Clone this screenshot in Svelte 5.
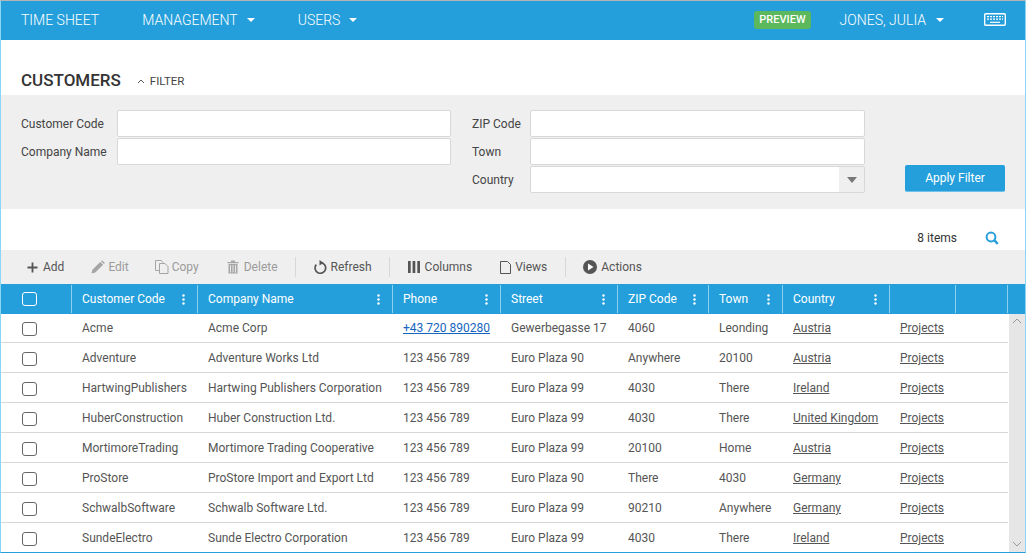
<script>
  const columns = ['Customer Code', 'Company Name', 'Phone', 'Street', 'ZIP Code', 'Town', 'Country']

  const customers = [
    ['Acme', 'Acme Corp', '+43 720 890280', 'Gewerbegasse 17', '4060', 'Leonding', 'Austria'],
    ['Adventure', 'Adventure Works Ltd', '123 456 789', 'Euro Plaza 90', 'Anywhere', '20100', 'Austria'],
    ['HartwingPublishers', 'Hartwing Publishers Corporation', '123 456 789', 'Euro Plaza 99', '4030', 'There', 'Ireland'],
    ['HuberConstruction', 'Huber Construction Ltd.', '123 456 789', 'Euro Plaza 99', '4030', 'There', 'United Kingdom'],
    ['MortimoreTrading', 'Mortimore Trading Cooperative', '123 456 789', 'Euro Plaza 99', '20100', 'Home', 'Austria'],
    ['ProStore', 'ProStore Import and Export Ltd', '123 456 789', 'Euro Plaza 90', 'There', '4030', 'Germany'],
    ['SchwalbSoftware', 'Schwalb Software Ltd.', '123 456 789', 'Euro Plaza 99', '90210', 'Anywhere', 'Germany'],
    ['SundeElectro', 'Sunde Electro Corporation', '123 456 789', 'Euro Plaza 99', '4030', 'There', 'Ireland']
  ]
</script>

<div class="page">
  <nav class="navbar">
    <a class="nav-item first" href="/">TIME SHEET</a>
    <a class="nav-item management" href="/">MANAGEMENT <span class="caret"></span></a>
    <a class="nav-item" href="/">USERS <span class="caret"></span></a>
    <span class="preview">PREVIEW</span>
    <a class="nav-item user" href="/">JONES, JULIA <span class="caret"></span></a>
    <svg class="keyboard" width="22" height="13" viewBox="0 0 22 13" fill="none">
      <rect x=".7" y=".7" width="20.600" height="11.600" rx="1" stroke="#fff" stroke-width="1.400" />
      <path d="M3 3.700h16M3 6.200h16" stroke="#fff" stroke-width="1.300" stroke-dasharray="2 1" />
      <path d="M6 9.300h10" stroke="#fff" stroke-width="1.200" />
    </svg>
  </nav>

  <div class="title-row">
    <h1>CUSTOMERS</h1>
    <span class="filter-toggle">
      <svg width="8" height="5" viewBox="0 0 8 5" fill="none"><path d="M1 4l3-3 3 3" stroke="#555" stroke-width="1" /></svg>
      FILTER
    </span>
  </div>

  <section class="filter">
    <div class="filter-col first-col">
      <label><span>Customer Code</span><input type="text" /></label>
      <label><span>Company Name</span><input type="text" /></label>
    </div>
    <div class="filter-col second-col">
      <label><span>ZIP Code</span><input type="text" /></label>
      <label><span>Town</span><input type="text" /></label>
      <label>
        <span>Country</span>
        <div class="select"><i></i></div>
      </label>
    </div>
    <button class="apply">Apply Filter</button>
  </section>

  <div class="items-row">
    <span>8 items</span>
    <svg width="14" height="14" viewBox="0 0 14 14" fill="none">
      <circle cx="6" cy="6" r="4.400" stroke="#259fdb" stroke-width="2" />
      <path d="M9.200 9.200l3.600 3.600" stroke="#259fdb" stroke-width="2.400" />
    </svg>
  </div>

  <div class="toolbar">
    <span class="tool add">
      <svg width="11" height="11" viewBox="0 0 11 11"><path d="M5.500 .5v10M.5 5.500h10" stroke="#555" stroke-width="1.800" /></svg>
      Add
    </span>
    <span class="tool disabled edit">
      <svg width="14" height="14" viewBox="0 0 14 14"><path d="M.5 13.500l.9-3.800 7.800-7.800 2.900 2.900-7.800 7.800zM10 1.200l1-1 2.900 2.900-1 1z" fill="#a5a5a5" /></svg>
      Edit
    </span>
    <span class="tool disabled copy">
      <svg width="14" height="14" viewBox="0 0 14 14" fill="none" stroke="#a5a5a5"><path d="M4 10.500H.5V.5h6l1.500 2" /><path d="M4.500 3.500h5.500l3 3v7H4.500z" fill="#efefef" /></svg>
      Copy
    </span>
    <span class="tool disabled delete">
      <svg width="12" height="14" viewBox="0 0 12 14"><path d="M.5 2h11v1.200H.5zM4 .5h4v1.500H4zM1.500 4h9v9.500h-9z" fill="#a5a5a5" /><path d="M3.500 5v7.500M6 5v7.500M8.500 5v7.500" stroke="#efefef" stroke-width=".9" /></svg>
      Delete
    </span>
    <span class="sep"></span>
    <span class="tool refresh">
      <svg width="14" height="14" viewBox="0 0 14 14" fill="none"><path d="M3.300 4.600a5.300 5.300 0 1 0 4.200-1.900" stroke="#555" stroke-width="1.700" /><path d="M6.500 0l4 2.800-4 2.800z" fill="#555" /></svg>
      Refresh
    </span>
    <span class="sep"></span>
    <span class="tool columns">
      <svg width="12" height="12" viewBox="0 0 12 12"><path d="M0 0h2.700v12H0zM4.600 0h2.700v12H4.600zM9.300 0H12v12H9.300z" fill="#555" /></svg>
      Columns
    </span>
    <span class="tool views">
      <svg width="11" height="13" viewBox="0 0 11 13" fill="none"><path d="M.5 .5h7l3 3v9H.5z" stroke="#555" /></svg>
      Views
    </span>
    <span class="sep"></span>
    <span class="tool actions">
      <svg width="14" height="14" viewBox="0 0 14 14"><circle cx="7" cy="7" r="7" fill="#555" /><path d="M5 3.500l5.500 3.500L5 10.500z" fill="#fff" /></svg>
      Actions
    </span>
  </div>

  <div class="grid-head">
    <div class="head-cell check"><span class="box light"></span></div>
    {#each columns as col}
      <div class="head-cell">
        <span>{col}</span>
        <svg width="3" height="11" viewBox="0 0 3 11"><circle cx="1.500" cy="1.500" r="1.200" fill="#fff" /><circle cx="1.500" cy="5.500" r="1.200" fill="#fff" /><circle cx="1.500" cy="9.500" r="1.200" fill="#fff" /></svg>
      </div>
    {/each}
    <div class="head-cell"></div>
    <div class="head-cell"></div>
    <div class="head-cell last"></div>
  </div>

  <div class="grid-wrap">
    <div class="grid-body">
      {#each customers as row}
        <div class="grid-row">
          <div class="cell check"><span class="box"></span></div>
          {#each row as value, i}
            <div class="cell">
              {#if i === 2 && value.startsWith('+')}
                <a class="phone" href="/">{value}</a>
              {:else if i === 6}
                <a href="/">{value}</a>
              {:else}
                {value}
              {/if}
            </div>
          {/each}
          <div class="cell"><a href="/">Projects</a></div>
          <div class="cell"></div>
        </div>
      {/each}
    </div>
    <div class="scrollbar">
      <svg width="10" height="6" viewBox="0 0 10 6" fill="none"><path d="M1 5l4-4 4 4" stroke="#999" /></svg>
      <svg width="10" height="6" viewBox="0 0 10 6" fill="none"><path d="M1 1l4 4 4-4" stroke="#999" /></svg>
    </div>
  </div>
</div>

<style>
  :global(body) {
    margin: 0;
    background: #fff;
  }

  .page {
    width: 1026px;
    height: 553px;
    box-sizing: border-box;
    overflow: hidden;
    border-top: 1px solid #b5b5b5;
    border-left: 1px solid #8ad6f5;
    border-right: 1px solid #8ad6f5;
    border-bottom: 1px solid #259fdb;
    font-family: Roboto, sans-serif;
    font-size: 12px;
    color: #555;
  }

  .navbar {
    display: flex;
    align-items: center;
    height: 39px;
    box-sizing: border-box;
    padding-bottom: 2px;
    background: #259fdb;
    color: #fff;
    font-size: 14px;
  }

  .nav-item {
    color: #fff;
    text-decoration: none;
    font-weight: 300;
    display: flex;
    align-items: center;
  }

  .first {
    margin-left: 20px;
  }

  .management {
    margin-left: 43px;
    margin-right: 43px;
  }

  .caret {
    display: inline-block;
    margin-left: 9px;
    border-left: 4px solid transparent;
    border-right: 4px solid transparent;
    border-top: 4px solid #fff;
  }

  .user .caret {
    margin-left: 10px;
  }

  .preview {
    margin-left: auto;
    background: #5cb85c;
    color: #fff;
    font-size: 11px;
    font-weight: 500;
    line-height: 18px;
    padding: 0 5px;
    border-radius: 3px;
  }

  .user {
    margin-left: 29px;
  }

  .keyboard {
    margin-left: 40px;
    margin-right: 19px;
  }

  .title-row {
    display: flex;
    align-items: center;
    height: 55px;
    padding: 0 20px;
    box-sizing: border-box;
    padding-top: 25px;
  }

  h1 {
    margin: 0;
    font-size: 17px;
    font-weight: 500;
    color: #333;
  }

  .filter-toggle {
    margin-left: 16px;
    padding-top: 2px;
    font-size: 11.500px;
    color: #444;
    display: flex;
    align-items: center;
    gap: 5px;
  }

  .filter {
    position: relative;
    display: flex;
    height: 114px;
    box-sizing: border-box;
    padding: 15px 20px 0;
    background: #efefef;
  }

  .filter-col {
    display: flex;
    flex-direction: column;
    gap: 1px;
  }

  .first-col {
    width: 430px;
  }

  .second-col {
    margin-left: 21px;
  }

  label {
    display: flex;
    align-items: center;
    color: #444;
  }

  .first-col label span {
    width: 96px;
  }

  .second-col label span {
    width: 58px;
  }

  input,
  .select {
    box-sizing: border-box;
    height: 27px;
    background: #fff;
    border: 1px solid #d8d8d8;
    border-radius: 2px;
    margin: 0;
    padding: 0;
  }

  .first-col input {
    width: 334px;
  }

  .second-col input,
  .select {
    width: 335px;
  }

  .select {
    display: flex;
    justify-content: flex-end;
  }

  .select i {
    width: 25px;
    display: flex;
    align-items: center;
    justify-content: center;
    background: #efefef;
    position: relative;
  }

  .select i::after {
    content: '';
    border-left: 5px solid transparent;
    border-right: 5px solid transparent;
    border-top: 6px solid #777;
  }

  .apply {
    position: absolute;
    left: 904px;
    top: 70px;
    width: 100px;
    height: 27px;
    padding: 0;
    border: 0;
    border-bottom: 1px solid #6fc0ea;
    border-radius: 2px;
    background: #259fdb;
    color: #fff;
    font-family: inherit;
    font-size: 12px;
  }

  .items-row {
    display: flex;
    justify-content: flex-end;
    align-items: center;
    gap: 28px;
    height: 41px;
    box-sizing: border-box;
    padding: 16px 26px 0 0;
    color: #333;
  }

  .toolbar {
    display: flex;
    align-items: center;
    height: 34px;
    background: #efefef;
    padding-left: 26px;
  }

  .tool {
    display: flex;
    align-items: center;
    gap: 5px;
    color: #555;
  }

  .disabled {
    color: #9b9b9b;
  }

  .add { margin-right: 27px; }
  .edit { margin-right: 26px; gap: 3px; }
  .copy { margin-right: 28px; gap: 3px; }
  .delete { margin-right: 17px; }
  .refresh { margin-right: 17px; gap: 4px; }
  .columns { margin-right: 28px; }
  .views { margin-right: 18px; gap: 4px; }
  .actions { gap: 4px; }

  .sep {
    width: 1px;
    height: 20px;
    background: #d8d8d8;
    margin-right: 17px;
  }

  .sep:has(+ .columns) {
    margin-right: 18px;
  }

  .grid-head,
  .grid-row {
    display: grid;
    grid-template-columns: 71px 126px 195px 108px 117px 91px 74px 107px 66px 52px;
  }

  .grid-head {
    height: 30px;
    background: #259fdb;
    color: #fff;
    width: 1024px;
    grid-template-columns: 71px 126px 195px 108px 117px 91px 74px 107px 66px 52px 17px;
  }

  .head-cell {
    display: flex;
    align-items: center;
    justify-content: space-between;
    box-sizing: border-box;
    margin: 1px 0;
    padding: 0 12px 0 10px;
    border-right: 1px solid #8ad0f0;
    font-weight: 400;
  }

  .head-cell.last {
    border-right: 0;
  }

  .head-cell.check {
    justify-content: flex-start;
    padding: 0 0 0 21px;
  }

  .box {
    box-sizing: border-box;
    width: 15px;
    height: 14px;
    border: 1.500px solid #666;
    border-radius: 3px;
    background: #fff;
  }

  .box.light {
    background: transparent;
    border-color: #fff;
  }

  .grid-wrap {
    display: flex;
    height: 238px;
    overflow: hidden;
  }

  .grid-body {
    flex: none;
    width: 1007px;
    margin-top: -1px;
  }

  .grid-row {
    height: 30px;
    box-sizing: border-box;
    border-bottom: 1px solid #d8d8d8;
    overflow: hidden;
  }

  .grid-row:last-child {
    border-bottom: 0;
  }

  .cell {
    padding-left: 10px;
    line-height: 30px;
    white-space: nowrap;
    color: #555;
    min-width: 0;
  }

  .cell.check {
    display: flex;
    align-items: center;
    padding: 1px 0 0 21px;
  }

  .cell a {
    color: #555;
  }

  .cell a.phone {
    color: #1565c0;
  }

  .scrollbar {
    flex: 1;
    background: #e6e6e6;
    display: flex;
    flex-direction: column;
    justify-content: space-between;
    align-items: center;
    padding: 4px 0 5px;
    margin-left: 1px;
  }
</style>
